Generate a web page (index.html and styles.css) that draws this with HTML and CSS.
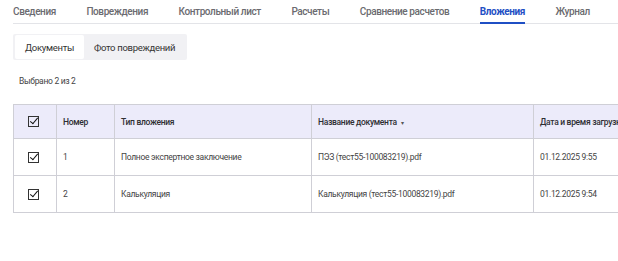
FILE: index.html
```html
<!DOCTYPE html>
<html lang="ru">
<head>
  <meta charset="UTF-8" />
  <title>Вложения</title>
  <link rel="stylesheet" href="styles.css">
</head>
<body>
  <nav class="tabs">
    <a class="tab">Сведения</a>
    <a class="tab">Повреждения</a>
    <a class="tab">Контрольный лист</a>
    <a class="tab">Расчеты</a>
    <a class="tab">Сравнение расчетов</a>
    <a class="tab active">Вложения</a>
    <a class="tab">Журнал</a>
  </nav>

  <div class="segment">
    <button class="seg-btn selected">Документы</button>
    <button class="seg-btn">Фото повреждений</button>
  </div>

  <p class="selected-count">Выбрано 2 из 2</p>

  <table class="files">
    <thead>
      <tr>
        <th class="col-check"><span class="check"></span></th>
        <th class="col-num">Номер</th>
        <th class="col-type">Тип вложения</th>
        <th class="col-name">Название документа <span class="sort">▾</span></th>
        <th class="col-date">Дата и время загрузки</th>
      </tr>
    </thead>
    <tbody>
      <tr>
        <td class="col-check"><span class="check"></span></td>
        <td>1</td>
        <td>Полное экспертное заключение</td>
        <td>ПЭЗ (тест55-100083219).pdf</td>
        <td>01.12.2025 9:55</td>
      </tr>
      <tr>
        <td class="col-check"><span class="check"></span></td>
        <td>2</td>
        <td>Калькуляция</td>
        <td>Калькуляция (тест55-100083219).pdf</td>
        <td>01.12.2025 9:54</td>
      </tr>
    </tbody>
  </table>
</body>
</html>
```

FILE: styles.css
```css
body {
  margin: 0;
  padding: 0 0 0 13px;
  font-family: Roboto, "Liberation Sans", sans-serif;
  color: #333;
  background: #fff;
  overflow: hidden;
}
.tabs {
  display: flex;
  gap: 30.5px;
  border-bottom: 1px solid #e3e4e8;
  height: 24px;
  box-sizing: border-box;
  white-space: nowrap;
}
.tab {
  font-size: 10px;
  font-weight: 500;
  letter-spacing: -0.4px;
  color: #6b6b70;
  padding-top: 6px;
  height: 23px;
  box-sizing: border-box;
}
.tab.active {
  color: #1f4fc4;
  font-weight: 700;
  border-bottom: 2px solid #1f4fc4;
  height: 24px;
}
.segment {
  display: inline-flex;
  margin-top: 10px;
  padding: 1px 2px;
  background: #f1f1f4;
  border-radius: 2px;
}
.seg-btn {
  font-family: inherit;
  font-size: 9.5px;
  letter-spacing: -0.3px;
  color: #333;
  border: none;
  background: transparent;
  padding: 0 10px;
  height: 24px;
  border-radius: 2px;
}
.seg-btn.selected {
  background: #fff;
}
.selected-count {
  margin: 16px 0 0 6px;
  font-size: 8.5px;
  letter-spacing: -0.3px;
  color: #444;
}
.files {
  margin-top: 18px;
  border-collapse: collapse;
  width: 640px;
  table-layout: fixed;
  font-size: 8.5px;
  letter-spacing: -0.3px;
}
.files th,
.files td {
  border: 1px solid #cfcfd6;
  text-align: left;
  padding: 0 0 0 6px;
  white-space: nowrap;
  overflow: hidden;
}
.files th {
  background: #ecebfa;
  font-weight: 500;
  color: #2e2e33;
  height: 33px;
}
.files td {
  height: 36px;
  color: #444;
}
.col-check { width: 28px; }
.files th.col-check,
.files td.col-check { padding: 0 0 0 14px; }
.col-num { width: 51px; }
.col-type { width: 190px; }
.col-name { width: 215px; }
.sort {
  font-size: 6px;
  color: #555;
  margin-left: 2px;
}
.check {
  display: inline-block;
  width: 9px;
  height: 9px;
  border: 1px solid #333;
  position: relative;
  vertical-align: middle;
}
.check::after {
  content: "";
  position: absolute;
  left: 3px;
  top: -1px;
  width: 3px;
  height: 7px;
  border: solid #111;
  border-width: 0 1.5px 1.5px 0;
  transform: rotate(40deg);
}
```
